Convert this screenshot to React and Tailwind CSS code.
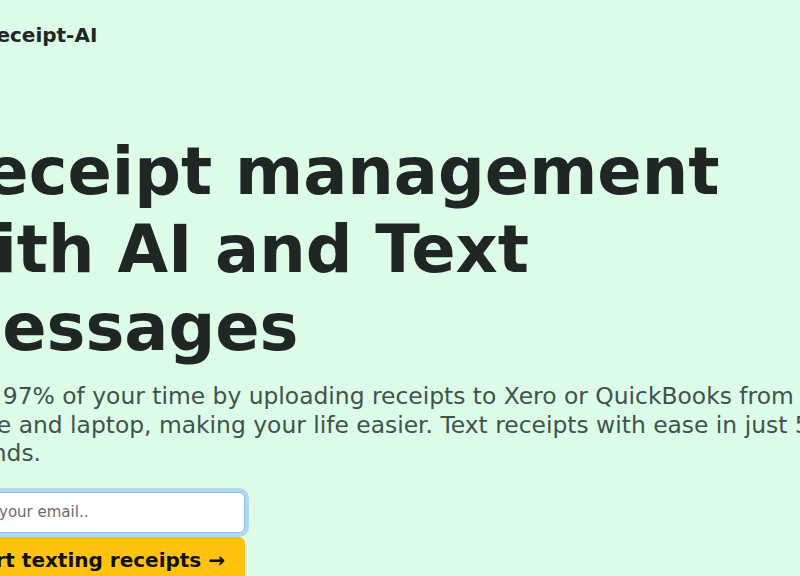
export default function App() {
  return (
    <div className="min-h-screen w-full overflow-hidden bg-[#dcfce7] font-['DejaVu_Sans',sans-serif]">
      <header className="ml-[-19px] pt-[21px]">
        <span className="text-[20px] leading-[28px] font-bold text-[#1f2624]">Receipt-AI</span>
      </header>
      <main className="ml-[-62px] mt-[83px] w-[940px]">
        <h1 className="ml-[-4px] text-[65.4px] leading-[78px] font-bold text-[#1f2624]">
          Receipt management with AI and Text messages
        </h1>
        <p className="mt-[16px] text-[23.4px] leading-[28.5px] text-[#3f534d]">
          Save 97% of your time by uploading receipts to Xero or QuickBooks from your phone and laptop, making your life easier. Text receipts with ease in just 5 seconds.
        </p>
        <div className="mt-[24px] flex w-[307px] flex-col">
          <input
            type="email"
            placeholder="Enter your email.."
            className="h-[41px] w-full rounded-md border border-[#8fc2ea] bg-white pl-[15px] pr-3 text-[15px] text-[#222] placeholder:text-[#6b6b6b] outline-none ring-4 ring-[#b2d5f1]"
          />
          <button className="mt-[4px] w-full rounded-md bg-[#fec20f] py-2 text-[20px] leading-[30px] font-bold text-[#111]">
            Start texting receipts →
          </button>
        </div>
      </main>
    </div>
  );
}
